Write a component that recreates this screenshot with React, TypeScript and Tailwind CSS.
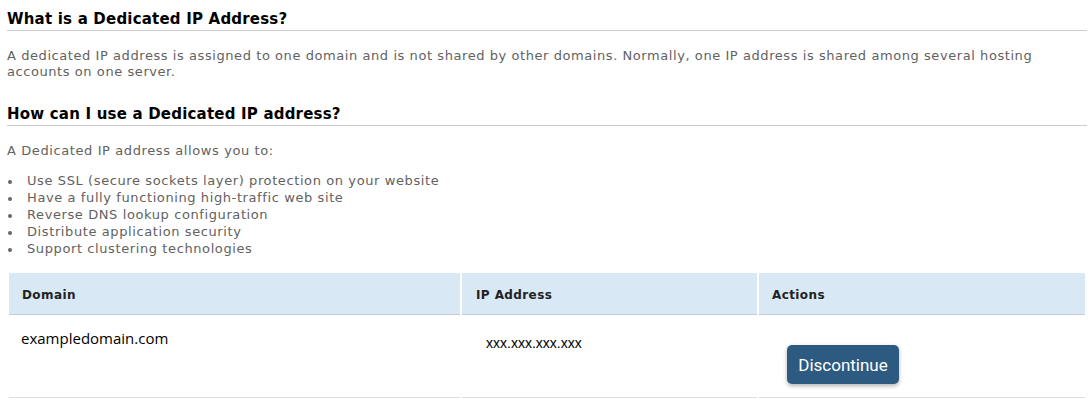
import React from "react";

const items = [
  "Use SSL (secure sockets layer) protection on your website",
  "Have a fully functioning high-traffic web site",
  "Reverse DNS lookup configuration",
  "Distribute application security",
  "Support clustering technologies",
];

export default function App() {
  return (
    <div className="w-[1092px] h-[408px] bg-white overflow-hidden">
      <div className="w-[1080px] ml-[7px] pt-[10px] font-['DejaVu_Sans',Verdana,sans-serif] text-[#626262]">
        <h2 className="text-[15px] leading-[18px] font-bold tracking-[0.2px] text-black pb-[2px] border-b border-[#cccccc]">
          What is a Dedicated IP Address?
        </h2>
        <p className="mt-[17px] text-[13px] leading-[16px] tracking-[0.57px]">
          A dedicated IP address is assigned to one domain and is not shared by other domains. Normally, one IP address is shared among several hosting accounts on one server.
        </p>
        <h2 className="mt-[25px] text-[15px] leading-[18px] font-bold tracking-[0.2px] text-black pb-[2px] border-b border-[#cccccc]">
          How can I use a Dedicated IP address?
        </h2>
        <p className="mt-[17px] text-[13px] leading-[16px] tracking-[0.6px]">A Dedicated IP address allows you to:</p>
        <ul className="mt-[13px] text-[13px] leading-[17px] tracking-[0.6px] pl-[1px]">
          {items.map((t) => (
            <li key={t} className="flex items-start">
              <span className="mt-[8px] w-[4px] h-[4px] rounded-full bg-[#666] shrink-0" />
              <span className="ml-[15px]">{t}</span>
            </li>
          ))}
        </ul>
        <table className="mt-[14px] w-[1080px] border-separate border-spacing-[2px] table-fixed">
          <thead>
            <tr>
              <th className="w-[451px] h-[42px] bg-[#d9e8f5] border-b border-[#c3ccd6] text-left pl-[13px] pt-[3px] text-[12px] leading-[15px] font-bold tracking-[0.4px] text-[#222] align-middle">
                Domain
              </th>
              <th className="w-[295px] h-[42px] bg-[#d9e8f5] border-b border-[#c3ccd6] text-left pl-[14px] pt-[3px] text-[12px] leading-[15px] font-bold tracking-[0.4px] text-[#222] align-middle">
                IP Address
              </th>
              <th className="h-[42px] bg-[#d9e8f5] border-b border-[#c3ccd6] text-left pl-[13px] pt-[3px] text-[12px] leading-[15px] font-bold tracking-[0.4px] text-[#222] align-middle">
                Actions
              </th>
            </tr>
          </thead>
          <tbody>
            <tr>
              <td className="h-[81px] align-top border-b border-[#dddddd] pl-[12px] pt-[11px] font-['Open_Sans',sans-serif] text-[15px] leading-[20px] text-black">
                exampledomain.com
              </td>
              <td className="h-[81px] align-top border-b border-[#dddddd] pl-[24px] pt-[18px] font-['Liberation_Sans',Arial,sans-serif] text-[14px] leading-[16px] text-black">
                xxx.xxx.xxx.xxx
              </td>
              <td className="h-[81px] align-top border-b border-[#dddddd] pl-[28px] pt-[28px]">
                <button className="w-[112px] h-[39px] rounded-[5px] bg-[#2d5a80] text-white font-['Roboto',sans-serif] text-[17px] leading-[20px] shadow-[0_2px_4px_rgba(0,0,0,0.3)]">
                  Discontinue
                </button>
              </td>
            </tr>
          </tbody>
        </table>
      </div>
    </div>
  );
}
